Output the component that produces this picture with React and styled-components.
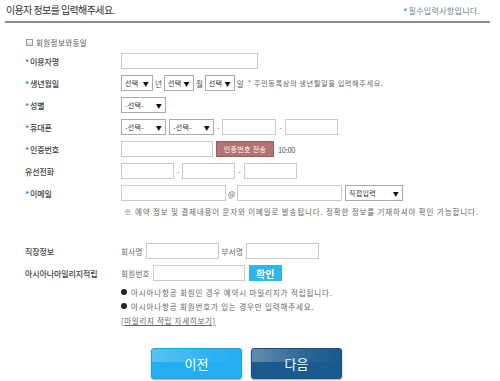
import React from "react";
import styled, { createGlobalStyle } from "styled-components";

const Global = createGlobalStyle`
  html, body { margin: 0; padding: 0; background: #fff; }
  body { font-family: "Noto Sans CJK KR", "Noto Sans", sans-serif; color: #444; width: 500px; height: 381px; overflow: hidden; }
  * { box-sizing: border-box; }
`;

const Page = styled.div`
  width: 500px;
  height: 381px;
`;

const Header = styled.div`
  margin-left: 5px;
  width: 485px;
  height: 23px;
  border-bottom: 2px solid #8a8a8a;
  display: flex;
  justify-content: space-between;
  align-items: center;
  padding: 0 10px 2px 1px;
`;

const Title = styled.h1`
  margin: 0;
  font-size: 10px;
  font-weight: 400;
  letter-spacing: -0.6px;
  color: #333;
`;

const Required = styled.span`
  font-size: 8px;
  color: #6e7f8f;
  letter-spacing: 0.3px;
  margin-top: 2px;
`;

const Star = styled.span`
  color: #2f8fd8;
  font-weight: 700;
  margin-right: 1px;
`;

const Form = styled.div`
  padding-left: 25px;
  padding-top: 12px;
`;

const CheckRow = styled.label`
  display: flex;
  align-items: center;
  gap: 3px;
  height: 14px;
  font-size: 7.5px;
  color: #555;
  letter-spacing: 0.4px;
`;

const CheckBox = styled.span`
  width: 7px;
  height: 7px;
  border: 1px solid #999;
  background: linear-gradient(#fff, #ddd);
  margin-left: 1px;
`;

const Row = styled.div`
  display: grid;
  grid-template-columns: 96px 1fr;
  align-items: center;
  height: ${(p) => p.$h || 22}px;
  margin-top: ${(p) => p.$mt || 0}px;
`;

const Label = styled.div`
  font-size: 8px;
  color: #444;
  font-weight: 500;
  letter-spacing: -0.1px;
`;

const Field = styled.div`
  display: flex;
  align-items: center;
  gap: ${(p) => p.$gap ?? 3}px;
  font-size: 7.5px;
  color: #555;
`;

const Input = styled.div`
  width: ${(p) => p.$w}px;
  height: 16px;
  border: 1px solid #c9c9c9;
  background: #fff;
`;

const Select = styled.div`
  width: ${(p) => p.$w}px;
  height: 16px;
  border: 1px solid #aaa;
  background: #fff;
  display: flex;
  align-items: center;
  justify-content: space-between;
  padding: 0 3px 0 3px;
  margin-left: ${(p) => p.$ml || 0}px;
  font-size: 7px;
  color: #333;
  letter-spacing: 0.3px;
`;

const Arrow = styled.span`
  font-size: 6px;
  color: #111;
`;

const Dash = styled.span`
  font-size: 7px;
  color: #666;
`;

const Hint = styled.span`
  font-size: 7.2px;
  color: #666;
  letter-spacing: 0.6px;
  margin-left: 2px;
`;

const SendBtn = styled.button`
  width: 58px;
  height: 16px;
  border: 1px solid #9c5c5c;
  background: #b47373;
  color: #fff;
  font-family: inherit;
  font-size: 7px;
  padding: 0;
  letter-spacing: 0.3px;
`;

const Timer = styled.span`
  font-size: 7.5px;
  color: #555;
  letter-spacing: -0.3px;
  margin-left: 1px;
`;

const Note = styled.div`
  font-size: 7.5px;
  color: #666;
  letter-spacing: 0.85px;
  padding-left: 99px;
  height: 14px;
  display: flex;
  align-items: center;
  white-space: nowrap;
`;

const SmallLabel = styled.span`
  font-size: 7.5px;
  color: #666;
  letter-spacing: 0.3px;
`;

const ConfirmBtn = styled.button`
  width: 33px;
  height: 16px;
  border: none;
  background: #2cb6ea;
  color: #fff;
  font-family: inherit;
  font-weight: 700;
  font-size: 10px;
  padding: 0;
  margin-left: 1px;
`;

const Bullet = styled.div`
  height: 14px;
  display: flex;
  align-items: center;
  padding-left: 96px;
  margin-top: ${(p) => p.$mt || 0}px;
  font-size: 7.5px;
  color: #666;
  letter-spacing: 0.85px;
  white-space: nowrap;
`;

const Dot = styled.span`
  display: inline-block;
  width: 6px;
  height: 6px;
  border-radius: 50%;
  background: #222;
  margin-right: 4px;
`;

const Link = styled.a`
  color: #666;
  text-decoration: underline;
  font-size: 7.5px;
  letter-spacing: 0.7px;
`;

const Buttons = styled.div`
  display: flex;
  gap: 9px;
  padding-left: 151px;
  margin-top: 21px;
`;

const BigButton = styled.button`
  position: relative;
  overflow: hidden;
  width: 91px;
  height: 31px;
  border: 1px solid ${(p) => (p.$dark ? "#15507f" : "#1ea2e2")};
  border-radius: 3px;
  background: ${(p) => (p.$dark ? "#1b5a8e" : "#22aef0")};
  color: #fff;
  font-family: inherit;
  font-size: 13px;
  padding: 0;
  box-shadow: 0 1px 2px rgba(0, 0, 0, 0.35);
  &::before {
    content: "";
    position: absolute;
    left: 0;
    top: 0;
    right: 0;
    height: 46%;
    background: linear-gradient(
      to right,
      rgba(255, 255, 255, ${(p) => (p.$dark ? 0.3 : 0.25)}),
      rgba(255, 255, 255, 0.06) 65%,
      rgba(255, 255, 255, 0)
    );
  }
  span {
    position: relative;
  }
`;

const Req = ({ children }) => (
  <Label>
    <Star>*</Star>
    {children}
  </Label>
);

const Sel = ({ w, text, ml }) => (
  <Select $w={w} $ml={ml}>
    <span>{text}</span>
    <Arrow>▼</Arrow>
  </Select>
);

export default function App() {
  return (
    <Page>
      <Global />
      <Header>
        <Title>이용자 정보를 입력해주세요.</Title>
        <Required>
          <Star>*</Star>필수입력사항입니다.
        </Required>
      </Header>
      <Form>
        <CheckRow>
          <CheckBox />
          회원정보와동일
        </CheckRow>
        <Row $mt={1}>
          <Req>이용자명</Req>
          <Field>
            <Input $w={137} />
          </Field>
        </Row>
        <Row>
          <Req>생년월일</Req>
          <Field $gap={2}>
            <Sel w={32} text="선택" />
            <span>년</span>
            <Sel w={30} text="선택" />
            <span>월</span>
            <Sel w={30} text="선택" />
            <span>일</span>
            <Hint>* 주민등록상의 생년월일을 입력해주세요.</Hint>
          </Field>
        </Row>
        <Row>
          <Req>성별</Req>
          <Field>
            <Sel w={45} text="-선택-" />
          </Field>
        </Row>
        <Row>
          <Req>휴대폰</Req>
          <Field>
            <Sel w={45} text="-선택-" />
            <Sel w={45} text="-선택-" />
            <Dash>-</Dash>
            <Input $w={54} />
            <Dash>-</Dash>
            <Input $w={53} />
          </Field>
        </Row>
        <Row>
          <Req>인증번호</Req>
          <Field>
            <Input $w={92} />
            <SendBtn>인증번호 전송</SendBtn>
            <Timer>10:00</Timer>
          </Field>
        </Row>
        <Row>
          <Label>유선전화</Label>
          <Field>
            <Input $w={53} />
            <Dash>-</Dash>
            <Input $w={53} />
            <Dash>-</Dash>
            <Input $w={53} />
          </Field>
        </Row>
        <Row>
          <Req>이메일</Req>
          <Field $gap={2}>
            <Input $w={105} />
            <span>@</span>
            <Input $w={105} />
            <Sel w={58} ml={1} text="직접입력" />
          </Field>
        </Row>
        <Note>※ 예약 정보 및 결제내용이 문자와 이메일로 발송됩니다. 정확한 정보를 기재하셔야 확인 가능합니다.</Note>
        <Row $mt={22}>
          <Label>직장정보</Label>
          <Field>
            <SmallLabel>회사명</SmallLabel>
            <Input $w={73} />
            <SmallLabel>부서명</SmallLabel>
            <Input $w={73} />
          </Field>
        </Row>
        <Row>
          <Label>아시아나마일리지적립</Label>
          <Field>
            <SmallLabel>회원번호</SmallLabel>
            <Input $w={92} />
            <ConfirmBtn>확인</ConfirmBtn>
          </Field>
        </Row>
        <Bullet $mt={1}>
          <Dot />아시아나항공 회원인 경우 예약시 마일리지가 적립됩니다.
        </Bullet>
        <Bullet>
          <Dot />아시아나항공 회원번호가 있는 경우만 입력해주세요.
        </Bullet>
        <Bullet>
          <Link href="#">[마일리지 적립 자세히보기]</Link>
        </Bullet>
      </Form>
      <Buttons>
        <BigButton>
          <span>이전</span>
        </BigButton>
        <BigButton $dark>
          <span>다음</span>
        </BigButton>
      </Buttons>
    </Page>
  );
}
